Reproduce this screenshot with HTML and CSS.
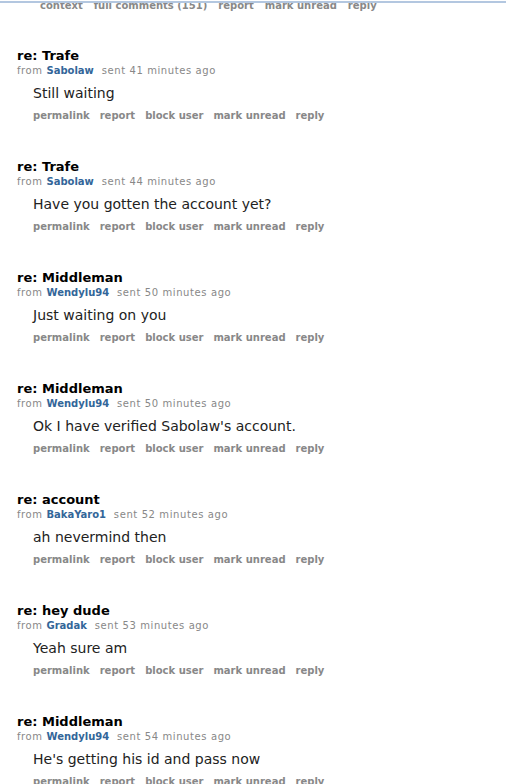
FILE: index.html
```html
<!DOCTYPE html>
<html lang="en">
  <head>
    <meta charset="UTF-8" />
    <meta name="viewport" content="width=device-width, initial-scale=1.0" />
    <title>messages</title>
    <link rel="stylesheet" href="styles.css">
  </head>
  <body>
    <div class="top-bar">
      <ul class="flat-list top-buttons">
        <li>context</li>
        <li>full comments (151)</li>
        <li>report</li>
        <li>mark unread</li>
        <li>reply</li>
      </ul>
      <div class="top-line"></div>
    </div>
    <main class="inbox">
      <div class="message">
        <p class="subject">re: Trafe</p>
        <p class="tagline">from <a class="author" href="#">Sabolaw</a> sent 41 minutes ago</p>
        <div class="md"><p>Still waiting</p></div>
        <ul class="flat-list buttons">
          <li>permalink</li><li>report</li><li>block user</li><li>mark unread</li><li>reply</li>
        </ul>
      </div>
      <div class="message">
        <p class="subject">re: Trafe</p>
        <p class="tagline">from <a class="author" href="#">Sabolaw</a> sent 44 minutes ago</p>
        <div class="md"><p>Have you gotten the account yet?</p></div>
        <ul class="flat-list buttons">
          <li>permalink</li><li>report</li><li>block user</li><li>mark unread</li><li>reply</li>
        </ul>
      </div>
      <div class="message">
        <p class="subject">re: Middleman</p>
        <p class="tagline">from <a class="author" href="#">Wendylu94</a> sent 50 minutes ago</p>
        <div class="md"><p>Just waiting on you</p></div>
        <ul class="flat-list buttons">
          <li>permalink</li><li>report</li><li>block user</li><li>mark unread</li><li>reply</li>
        </ul>
      </div>
      <div class="message">
        <p class="subject">re: Middleman</p>
        <p class="tagline">from <a class="author" href="#">Wendylu94</a> sent 50 minutes ago</p>
        <div class="md"><p>Ok I have verified Sabolaw's account.</p></div>
        <ul class="flat-list buttons">
          <li>permalink</li><li>report</li><li>block user</li><li>mark unread</li><li>reply</li>
        </ul>
      </div>
      <div class="message">
        <p class="subject">re: account</p>
        <p class="tagline">from <a class="author" href="#">BakaYaro1</a> sent 52 minutes ago</p>
        <div class="md"><p>ah nevermind then</p></div>
        <ul class="flat-list buttons">
          <li>permalink</li><li>report</li><li>block user</li><li>mark unread</li><li>reply</li>
        </ul>
      </div>
      <div class="message">
        <p class="subject">re: hey dude</p>
        <p class="tagline">from <a class="author" href="#">Gradak</a> sent 53 minutes ago</p>
        <div class="md"><p>Yeah sure am</p></div>
        <ul class="flat-list buttons">
          <li>permalink</li><li>report</li><li>block user</li><li>mark unread</li><li>reply</li>
        </ul>
      </div>
      <div class="message">
        <p class="subject">re: Middleman</p>
        <p class="tagline">from <a class="author" href="#">Wendylu94</a> sent 54 minutes ago</p>
        <div class="md"><p>He's getting his id and pass now</p></div>
        <ul class="flat-list buttons">
          <li>permalink</li><li>report</li><li>block user</li><li>mark unread</li><li>reply</li>
        </ul>
      </div>
    </main>
  </body>
</html>
```

FILE: styles.css
```css
:root {
  --link-color: #336699;
  --muted-color: #888888;
  --text-color: #222222;
}

html {
  box-sizing: border-box;
}

*,
*::before,
*::after {
  box-sizing: border-box;
}

body {
  margin: 0;
  overflow: hidden;
  font-family: "DejaVu Sans", Verdana, sans-serif;
  color: var(--text-color);
  background: #ffffff;
}

p {
  margin: 0;
}

.flat-list {
  display: flex;
  list-style: none;
  margin: 0;
  padding: 0;
  font-size: 10px;
  font-weight: bold;
  color: var(--muted-color);
}

.flat-list li {
  padding-right: 10px;
}

.top-bar {
  position: relative;
  height: 13px;
  overflow: hidden;
}

.top-buttons {
  padding-left: 40px;
  line-height: 12px;
}

.top-buttons li {
  padding-right: 11px;
}

.top-line {
  position: absolute;
  top: 1px;
  left: 0;
  right: 0;
  height: 2px;
  background: #b3c7e0;
}

.inbox {
  padding-top: 35px;
}

.message {
  padding-left: 17px;
  height: 111px;
}

.subject {
  font-size: 13px;
  font-weight: bold;
  color: #000000;
  line-height: 16px;
}

.tagline {
  font-size: 10px;
  color: var(--muted-color);
  line-height: 14px;
  letter-spacing: 0.6px;
}

.author {
  color: var(--link-color);
  font-weight: bold;
  text-decoration: none;
  letter-spacing: 0;
  margin-right: 4px;
}

.md {
  padding-left: 16px;
  padding-top: 6px;
  font-size: 14px;
  line-height: 18px;
}

.buttons {
  padding-left: 16px;
  padding-top: 8px;
}
```
